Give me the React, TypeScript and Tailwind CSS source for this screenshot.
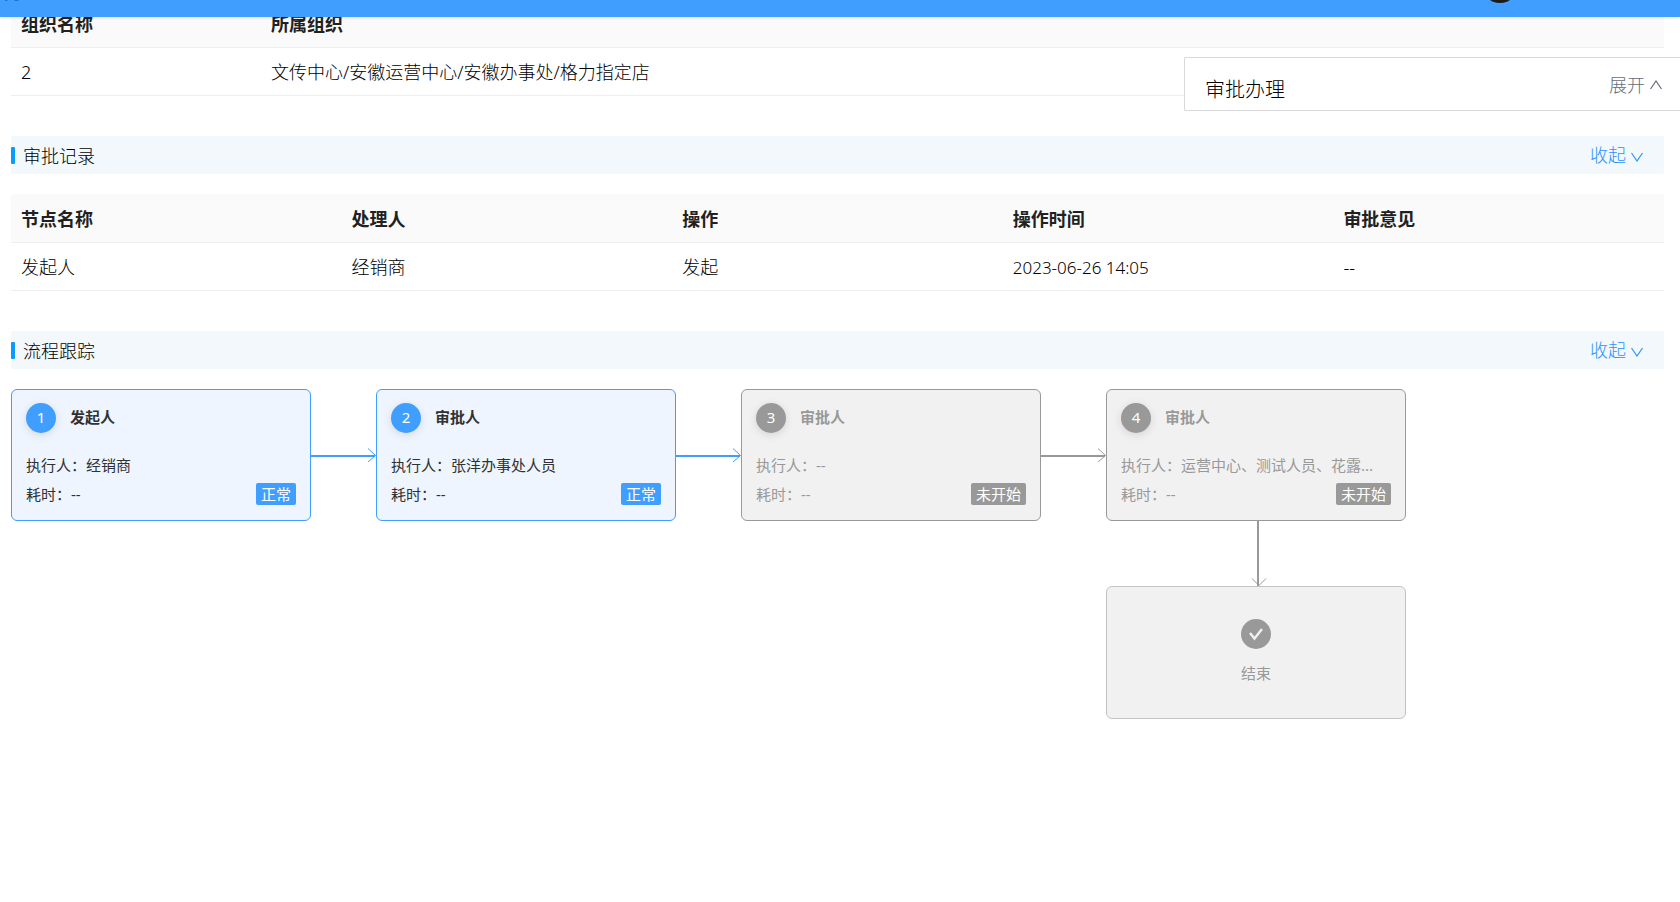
import React, { useState } from 'react';
import clsx from 'clsx';

type FlowNode = {
    id: number;
    title: string;
    executor: string;
    duration: string;
    status: string;
    active: boolean;
};

const orgs = [
    { name: '2', path: '文传中心/安徽运营中心/安徽办事处/格力指定店' },
];

const records = [
    { node: '发起人', handler: '经销商', action: '发起', time: '2023-06-26 14:05', remark: '--' },
];

const flowNodes: FlowNode[] = [
    { id: 1, title: '发起人', executor: '经销商', duration: '--', status: '正常', active: true },
    { id: 2, title: '审批人', executor: '张洋办事处人员', duration: '--', status: '正常', active: true },
    { id: 3, title: '审批人', executor: '--', duration: '--', status: '未开始', active: false },
    { id: 4, title: '审批人', executor: '运营中心、测试人员、花露...', duration: '--', status: '未开始', active: false },
];

const Chevron: React.FC<{ up?: boolean }> = ({ up }) => (
    <svg className={clsx('w-3 h-3', up ? 'rotate-180' : 'mt-1')} viewBox="0 0 12 12" fill="none" stroke="currentColor" strokeWidth="1.2">
        <path d="M0.5 2L6 10L11.5 2" />
    </svg>
);

const SectionBar: React.FC<{ title: string; open: boolean; onToggle: () => void }> = ({ title, open, onToggle }) => (
    <div className="flex items-center justify-between h-[38px] pr-[21px] bg-[#f2f8fc] rounded-[2px]">
        <div className="flex items-center gap-2">
            <span className="w-1 h-[17px] bg-[#0a9bff] rounded-[1px]" />
            <h2 className="pt-0.5 text-[18px] leading-[26px] font-light text-black">{title}</h2>
        </div>
        <button type="button" onClick={onToggle} className="flex items-center gap-[5px] text-[18px] leading-[26px] font-light text-[#2b92ff]">
            {open ? '收起' : '展开'}
            <Chevron up={!open} />
        </button>
    </div>
);

const Th: React.FC<{ className?: string; children: React.ReactNode }> = ({ className, children }) => (
    <th className={clsx('h-[49px] px-[10px] pt-0.5 text-left font-bold bg-[#fafafa] border-b border-[#eeeeee]', className)}>{children}</th>
);

const Td: React.FC<{ className?: string; children: React.ReactNode }> = ({ className, children }) => (
    <td className={clsx('h-12 px-[10px] pt-0.5 font-light text-black border-b border-[#eeeeee]', className)}>{children}</td>
);

const NodeCard: React.FC<{ node: FlowNode }> = ({ node }) => (
    <div
        className={clsx(
            'w-[300px] h-[132px] shrink-0 px-[14px] pt-[13px] rounded-md border text-[15px]',
            node.active ? 'bg-[#eef5ff] border-[#409eff] text-[#303133]' : 'bg-[#f1f1f1] border-[#999999] text-[#999999]'
        )}
    >
        <div className="flex items-center gap-[14px]">
            <span
                className={clsx(
                    'w-[30px] h-[30px] leading-7 text-center rounded-full text-white shadow-[0_2px_8px_rgba(0,0,0,0.12)]',
                    node.active ? 'bg-[#409eff]' : 'bg-[#999999]'
                )}
            >
                {node.id}
            </span>
            <h3 className="pb-0.5 font-bold">{node.title}</h3>
        </div>
        <p className="mt-[17px] leading-[30px]">执行人：{node.executor}</p>
        <div className="flex items-center justify-between leading-7">
            <span>耗时：{node.duration}</span>
            <span className={clsx('px-[5px] leading-[22px] rounded-[2px] text-white', node.active ? 'bg-[#409eff]' : 'bg-[#999999]')}>
                {node.status}
            </span>
        </div>
    </div>
);

const ArrowRight: React.FC<{ active: boolean }> = ({ active }) => (
    <svg
        className={clsx('w-[65px] h-[14px] shrink-0', active ? 'text-[#409eff]' : 'text-[#999999]')}
        viewBox="0 0 65 14"
        fill="none"
        stroke="currentColor"
    >
        <path d="M0 8H64" strokeWidth="2" />
        <path d="M57 0.5L64.5 7.5L57 14" />
    </svg>
);

const App: React.FC = () => {
    const [recordsOpen, setRecordsOpen] = useState(true);
    const [flowOpen, setFlowOpen] = useState(true);
    const [panelOpen, setPanelOpen] = useState(false);

    return (
        <div className="min-h-screen overflow-x-hidden bg-white text-[#212121] text-[18px] font-['Noto_Sans','Noto_Sans_CJK_SC',sans-serif]">
            {/* Top bar, mostly scrolled away */}
            <header className="relative z-10 flex items-end justify-between h-[17px] pl-1 pr-[162px] overflow-hidden bg-[#409eff] shadow-[0_1px_3px_rgba(0,21,41,0.12)]">
                <svg className="w-4 h-[17px] text-[#1a73e0]" viewBox="0 0 16 17" fill="currentColor">
                    <path d="M1 0H4L3 1H1ZM10 0H15L14 1H11Z" />
                </svg>
                <span className="w-9 h-9 mb-[14px] shrink-0 rounded-full bg-[#1c1b1a]" />
            </header>

            <main className="-mt-[18px] ml-[11px] mr-4">
                <table className="w-full table-fixed border-separate border-spacing-0">
                    <thead>
                        <tr>
                            <Th className="w-[250px]">组织名称</Th>
                            <Th>所属组织</Th>
                        </tr>
                    </thead>
                    <tbody>
                        {orgs.map((o) => (
                            <tr key={o.name}>
                                <Td>{o.name}</Td>
                                <Td>{o.path}</Td>
                            </tr>
                        ))}
                    </tbody>
                </table>

                <section className="mt-10">
                    <SectionBar title="审批记录" open={recordsOpen} onToggle={() => setRecordsOpen(!recordsOpen)} />
                    {recordsOpen && (
                        <table className="w-full mt-5 table-fixed border-separate border-spacing-0">
                            <thead>
                                <tr>
                                    <Th className="rounded-tl-[2px]">节点名称</Th>
                                    <Th>处理人</Th>
                                    <Th>操作</Th>
                                    <Th>操作时间</Th>
                                    <Th className="rounded-tr-[2px]">审批意见</Th>
                                </tr>
                            </thead>
                            <tbody>
                                {records.map((r) => (
                                    <tr key={r.time}>
                                        <Td>{r.node}</Td>
                                        <Td>{r.handler}</Td>
                                        <Td>{r.action}</Td>
                                        <Td className="text-[17px]">{r.time}</Td>
                                        <Td>{r.remark}</Td>
                                    </tr>
                                ))}
                            </tbody>
                        </table>
                    )}
                </section>

                <section className="mt-10">
                    <SectionBar title="流程跟踪" open={flowOpen} onToggle={() => setFlowOpen(!flowOpen)} />
                    {flowOpen && (
                        <div className="w-fit mt-5">
                            <div className="flex items-center">
                                {flowNodes.map((n, i) => (
                                    <React.Fragment key={n.id}>
                                        {i > 0 && <ArrowRight active={flowNodes[i - 1].active} />}
                                        <NodeCard node={n} />
                                    </React.Fragment>
                                ))}
                            </div>
                            <div className="flex flex-col items-center w-[300px] ml-auto">
                                <svg className="w-6 h-[65px] text-[#999999]" viewBox="0 0 24 65" fill="none" stroke="currentColor">
                                    <path d="M14 0V65" strokeWidth="2" />
                                    <path d="M8 57.5L15 64.5L22 57.5" />
                                </svg>
                                <div className="flex flex-col items-center justify-center gap-3 w-full h-[133px] pb-0.5 rounded-md border border-[#c4c4c4] bg-[#f1f1f1] text-[15px] text-[#999999]">
                                    <svg className="w-[30px] h-[30px]" viewBox="0 0 30 30">
                                        <circle cx="15" cy="15" r="15" fill="#999999" />
                                        <path d="M9 14L13.5 19.5L21 10" fill="none" stroke="#f1f1f1" strokeWidth="2.4" />
                                    </svg>
                                    <span className="leading-6">结束</span>
                                </div>
                            </div>
                        </div>
                    )}
                </section>
            </main>

            {/* Floating approval panel */}
            <aside className="fixed top-[57px] right-0 flex justify-between w-[496px] h-[54px] pl-5 pr-[18px] bg-white border border-r-0 border-[#d9d9d9] rounded-l-[2px]">
                <h2 className="pt-[18px] text-[20px] leading-7 font-light text-black">审批办理</h2>
                <button type="button" onClick={() => setPanelOpen(!panelOpen)} className="flex items-center gap-[5px] h-[54px] text-[18px] font-light text-[#666b78]">
                    {panelOpen ? '收起' : '展开'}
                    <Chevron up={!panelOpen} />
                </button>
            </aside>
        </div>
    );
};

export default App;
